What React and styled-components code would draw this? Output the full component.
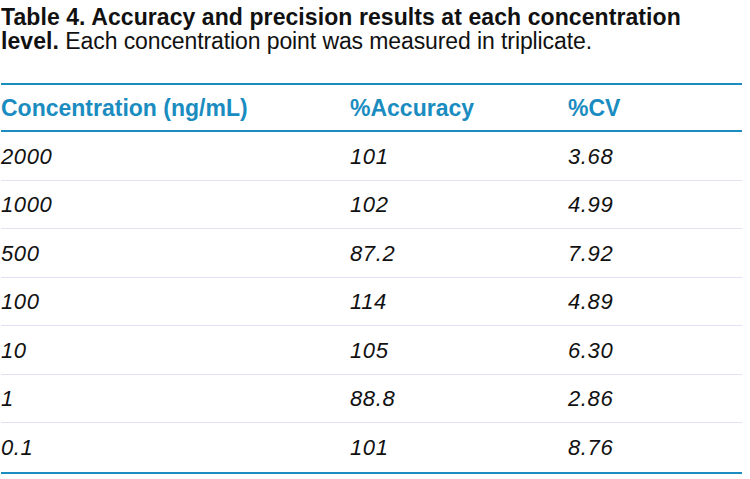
import React from "react"
import styled, { createGlobalStyle } from "styled-components"

const GlobalStyle = createGlobalStyle`
  body {
    margin: 0;
    background: #ffffff;
    font-family: "Liberation Sans", Arial, sans-serif;
  }
`

const BLUE = "#1a8cbf"

const Wrapper = styled.div`
  width: 750px;
  padding: 5px 0 0 1px;
  box-sizing: border-box;
`

const Caption = styled.p`
  margin: 0;
  max-width: 690px;
  font-size: 23px;
  line-height: 24px;
  color: #111;
  font-weight: 400;
  letter-spacing: -0.1px;
`

const Strong = styled.b`
  font-weight: 700;
  letter-spacing: 0.08px;
`

const Table = styled.div`
  margin-top: 30px;
  width: 741px;
  border-top: 2px solid ${BLUE};
  border-bottom: 2px solid ${BLUE};
`

const Row = styled.div`
  display: grid;
  grid-template-columns: 349px 218px 1fr;
  align-items: center;
  height: ${({ $header }) => ($header ? "47px" : "48.5px")};
  border-bottom: ${({ $header, $last }) =>
    $header ? `2px solid ${BLUE}` : $last ? "none" : "1px solid #e2e2f6"};
  box-sizing: border-box;
`

const HeadCell = styled.div`
  font-size: 23px;
  font-weight: 700;
  color: ${BLUE};
  padding-top: 2px;
`

const Cell = styled.div`
  font-size: 22px;
  font-style: italic;
  letter-spacing: 0.6px;
  color: #111;
  padding-top: 2px;
`

const rows = [
  ["2000", "101", "3.68"],
  ["1000", "102", "4.99"],
  ["500", "87.2", "7.92"],
  ["100", "114", "4.89"],
  ["10", "105", "6.30"],
  ["1", "88.8", "2.86"],
  ["0.1", "101", "8.76"],
]

const App = () => {
  return (
    <Wrapper>
      <GlobalStyle />
      <Caption>
        <Strong>Table 4. Accuracy and precision results at each concentration level.</Strong>{" "}
        Each concentration point was measured in triplicate.
      </Caption>
      <Table>
        <Row $header>
          <HeadCell>Concentration (ng/mL)</HeadCell>
          <HeadCell>%Accuracy</HeadCell>
          <HeadCell>%CV</HeadCell>
        </Row>
        {rows.map((r, i) => (
          <Row key={r[0]} $last={i === rows.length - 1}>
            <Cell>{r[0]}</Cell>
            <Cell>{r[1]}</Cell>
            <Cell>{r[2]}</Cell>
          </Row>
        ))}
      </Table>
    </Wrapper>
  )
}

export default App
